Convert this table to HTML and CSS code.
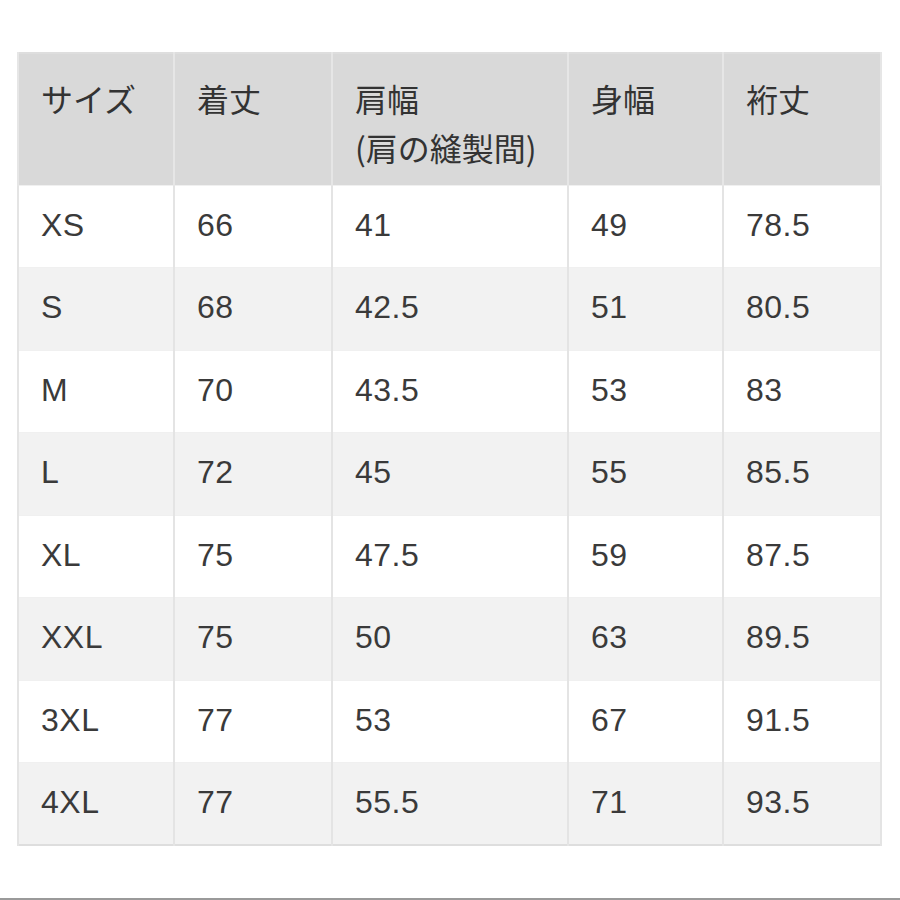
FILE: index.html
```html
<!DOCTYPE html>
<html lang="ja">
<head>
<meta charset="utf-8">
<link rel="stylesheet" href="styles.css">
</head>
<body>
<div class="page">
  <table class="size-table">
    <colgroup>
      <col class="c1"><col class="c2"><col class="c3"><col class="c4"><col class="c5">
    </colgroup>
    <thead>
      <tr>
        <th>サイズ</th>
        <th>着丈</th>
        <th>肩幅<br>(肩の縫製間)</th>
        <th>身幅</th>
        <th>裄丈</th>
      </tr>
    </thead>
    <tbody>
      <tr><td>XS</td><td>66</td><td>41</td><td>49</td><td>78.5</td></tr>
      <tr><td>S</td><td>68</td><td>42.5</td><td>51</td><td>80.5</td></tr>
      <tr><td>M</td><td>70</td><td>43.5</td><td>53</td><td>83</td></tr>
      <tr><td>L</td><td>72</td><td>45</td><td>55</td><td>85.5</td></tr>
      <tr><td>XL</td><td>75</td><td>47.5</td><td>59</td><td>87.5</td></tr>
      <tr><td>XXL</td><td>75</td><td>50</td><td>63</td><td>89.5</td></tr>
      <tr><td>3XL</td><td>77</td><td>53</td><td>67</td><td>91.5</td></tr>
      <tr><td>4XL</td><td>77</td><td>55.5</td><td>71</td><td>93.5</td></tr>
    </tbody>
  </table>
</div>
</body>
</html>
```
FILE: styles.css
```css
html, body {
  margin: 0;
  padding: 0;
  background: #ffffff;
}
.page {
  box-sizing: border-box;
  height: 900px;
  padding: 52px 0 0 17px;
  border-bottom: 2px solid #9a9a9a;
}
.size-table {
  border-collapse: collapse;
  table-layout: fixed;
  width: 863px;
  font-family: "Liberation Sans", "Noto Sans CJK JP", sans-serif;
  font-size: 32px;
  letter-spacing: 0.5px;
  color: #3a3a3a;
  border: 2px solid #dedede;
}
.c1 { width: 156px; }
.c2 { width: 158px; }
.c3 { width: 236px; }
.c4 { width: 155px; }
.c5 { width: 158px; }
.size-table th {
  box-sizing: border-box;
  height: 132px;
  background: #d9d9d9;
  font-family: "Noto Sans CJK JP", "Liberation Sans", sans-serif;
  font-weight: normal;
  letter-spacing: 0;
  color: #333333;
  text-align: left;
  vertical-align: top;
  line-height: 49px;
  padding: 20px 6px 0 22px;
  border-left: 2px solid #e6e6e6;
  border-right: 2px solid #e6e6e6;
}
.size-table td {
  box-sizing: border-box;
  height: 82.5px;
  padding: 0 6px 2px 22px;
  text-align: left;
  vertical-align: middle;
  border-left: 2px solid #e4e4e4;
  border-right: 2px solid #e4e4e4;
  border-top: 1px solid #f0f0f0;
}
.size-table tbody tr:nth-child(odd) td { background: #ffffff; }
.size-table tbody tr:nth-child(even) td { background: #f2f2f2; }
```
